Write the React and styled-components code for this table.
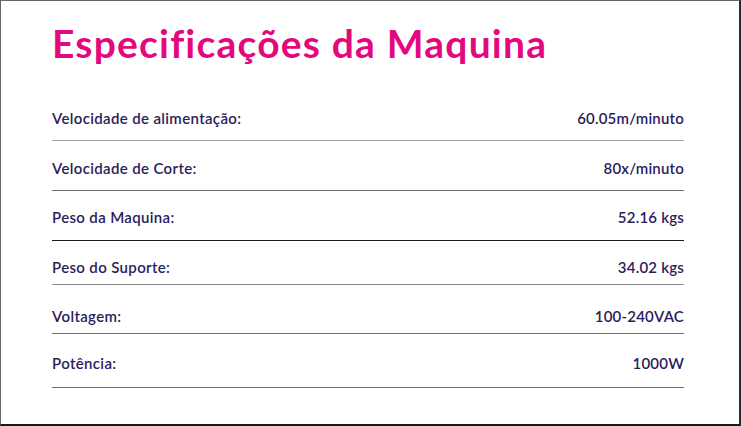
import styled, { createGlobalStyle } from 'styled-components';

const specs = [
  { label: 'Velocidade de alimentação:', value: '60.05m/minuto', top: 10, bottom: 13, line: '#a3a3a3' },
  { label: 'Velocidade de Corte:', value: '80x/minuto', top: 18, bottom: 13, line: '#6e6e6e' },
  { label: 'Peso da Maquina:', value: '52.16 kgs', top: 17, bottom: 14, line: '#1a1a1a' },
  { label: 'Peso do Suporte:', value: '34.02 kgs', top: 17, bottom: 8, line: '#8a8a8a' },
  { label: 'Voltagem:', value: '100-240VAC', top: 22, bottom: 8, line: '#707070' },
  { label: 'Potência:', value: '1000W', top: 20, bottom: 15, line: '#707070' },
];

const GlobalStyle = createGlobalStyle`
  html, body {
    margin: 0;
    padding: 0;
    background: #ffffff;
  }
  * {
    box-sizing: border-box;
  }
`;

const Frame = styled.div`
  width: 741px;
  height: 426px;
  border-top: 1px solid #666666;
  border-left: 1px solid #666666;
  border-right: 2px solid #2a2a2a;
  border-bottom: 2px solid #1a1a1a;
  background: #ffffff;
  padding: 19px 55px 0 51px;
  font-family: Lato, "Liberation Sans", sans-serif;
`;

const Title = styled.h1`
  margin: 0;
  font-size: 39px;
  line-height: 46px;
  font-weight: 700;
  color: #e4087f;
  letter-spacing: 1.2px;
`;

const SpecList = styled.div`
  display: flex;
  flex-direction: column;
  margin-top: 33px;
`;

const SpecRow = styled.div`
  display: flex;
  justify-content: space-between;
  align-items: center;
  padding: ${(p) => p.$top}px 0 ${(p) => p.$bottom}px;
  border-bottom: 1px solid ${(p) => p.$line};
  color: #2b1d5c;
  font-size: 15px;
  line-height: 18px;
  font-weight: 600;
`;

const Label = styled.span`
  letter-spacing: 0.35px;
`;

const Value = styled.span`
  letter-spacing: 0.2px;
`;

export default function App() {
  return (
    <>
      <GlobalStyle />
      <Frame>
        <Title>Especificações da Maquina</Title>
        <SpecList>
          {specs.map((s) => (
            <SpecRow key={s.label} $top={s.top} $bottom={s.bottom} $line={s.line}>
              <Label>{s.label}</Label>
              <Value>{s.value}</Value>
            </SpecRow>
          ))}
        </SpecList>
      </Frame>
    </>
  );
}
